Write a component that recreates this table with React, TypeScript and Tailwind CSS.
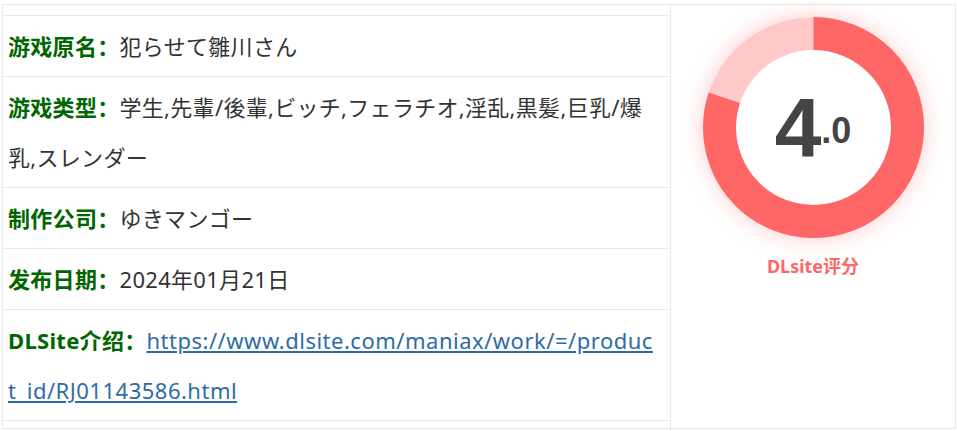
export default function App() {
  const rows = [
    { label: '游戏原名：', value: '犯らせて雛川さん' },
    { label: '游戏类型：', value: '学生,先輩/後輩,ビッチ,フェラチオ,淫乱,黒髪,巨乳/爆乳,スレンダー' },
    { label: '制作公司：', value: 'ゆきマンゴー' },
    { label: '发布日期：', value: '2024年01月21日' },
  ];
  const url = 'https://www.dlsite.com/maniax/work/=/product_id/RJ01143586.html';

  return (
    <div className="bg-white w-[957px] h-[431px] pl-[2px] pt-[4px]">
      <div
        className="grid grid-cols-[667px_1fr] w-[954px] h-[425px] border border-[#e3ecf5]"
        style={{ fontFamily: '"Noto Sans", "Noto Sans CJK SC", sans-serif' }}
      >
        <div className="py-[10px]">
          <div className="border-t border-[#e3ecf5]">
            {rows.map((r) => (
              <div key={r.label} className="border-b border-[#e3ecf5] pl-[5px] pr-[12px] py-[5px] text-[22px] leading-[50px] tracking-[0.3px] text-[#333]">
                <b className="text-[#006600] font-bold">{r.label}</b>
                {r.value}
              </div>
            ))}
            <div className="border-b border-[#e3ecf5] pl-[5px] pr-[12px] py-[5px] text-[22px] leading-[50px] tracking-[0.3px] text-[#333] break-all">
              <b className="text-[#006600] font-bold">DLSite介绍：</b>
              <a href="#" className="text-[#2e6ca6] underline tracking-[0.5px]">{url}</a>
            </div>
          </div>
        </div>

        <div className="border-l border-[#e3ecf5] flex flex-col items-center pt-[12px]">
          <div className="relative w-[221px] h-[221px] rounded-full shadow-[0_0_22px_rgba(255,102,102,0.35)]">
            <svg width="221" height="221" viewBox="0 0 221 221" className="block">
              <circle cx="110.5" cy="110.5" r="94" fill="none" stroke="#ffc9c9" strokeWidth="33" />
              <circle
                cx="110.5"
                cy="110.5"
                r="94"
                fill="none"
                stroke="#ff6666"
                strokeWidth="33"
                strokeDasharray={`${2 * Math.PI * 94 * 0.8} ${2 * Math.PI * 94}`}
                transform="rotate(-90 110.5 110.5)"
              />
            </svg>
            <div className="absolute inset-0 flex items-center justify-center text-[#444] font-bold" style={{ fontFamily: '"Liberation Sans", Arial, sans-serif' }}>
              <span className="text-[84px] leading-none">4</span>
              <span className="text-[36px] leading-none mt-[6px]">.0</span>
            </div>
          </div>
          <div className="mt-[16px] text-[18px] leading-[24px] font-bold text-[#ff6666]">
            DLsite评分
          </div>
        </div>
      </div>
    </div>
  );
}
